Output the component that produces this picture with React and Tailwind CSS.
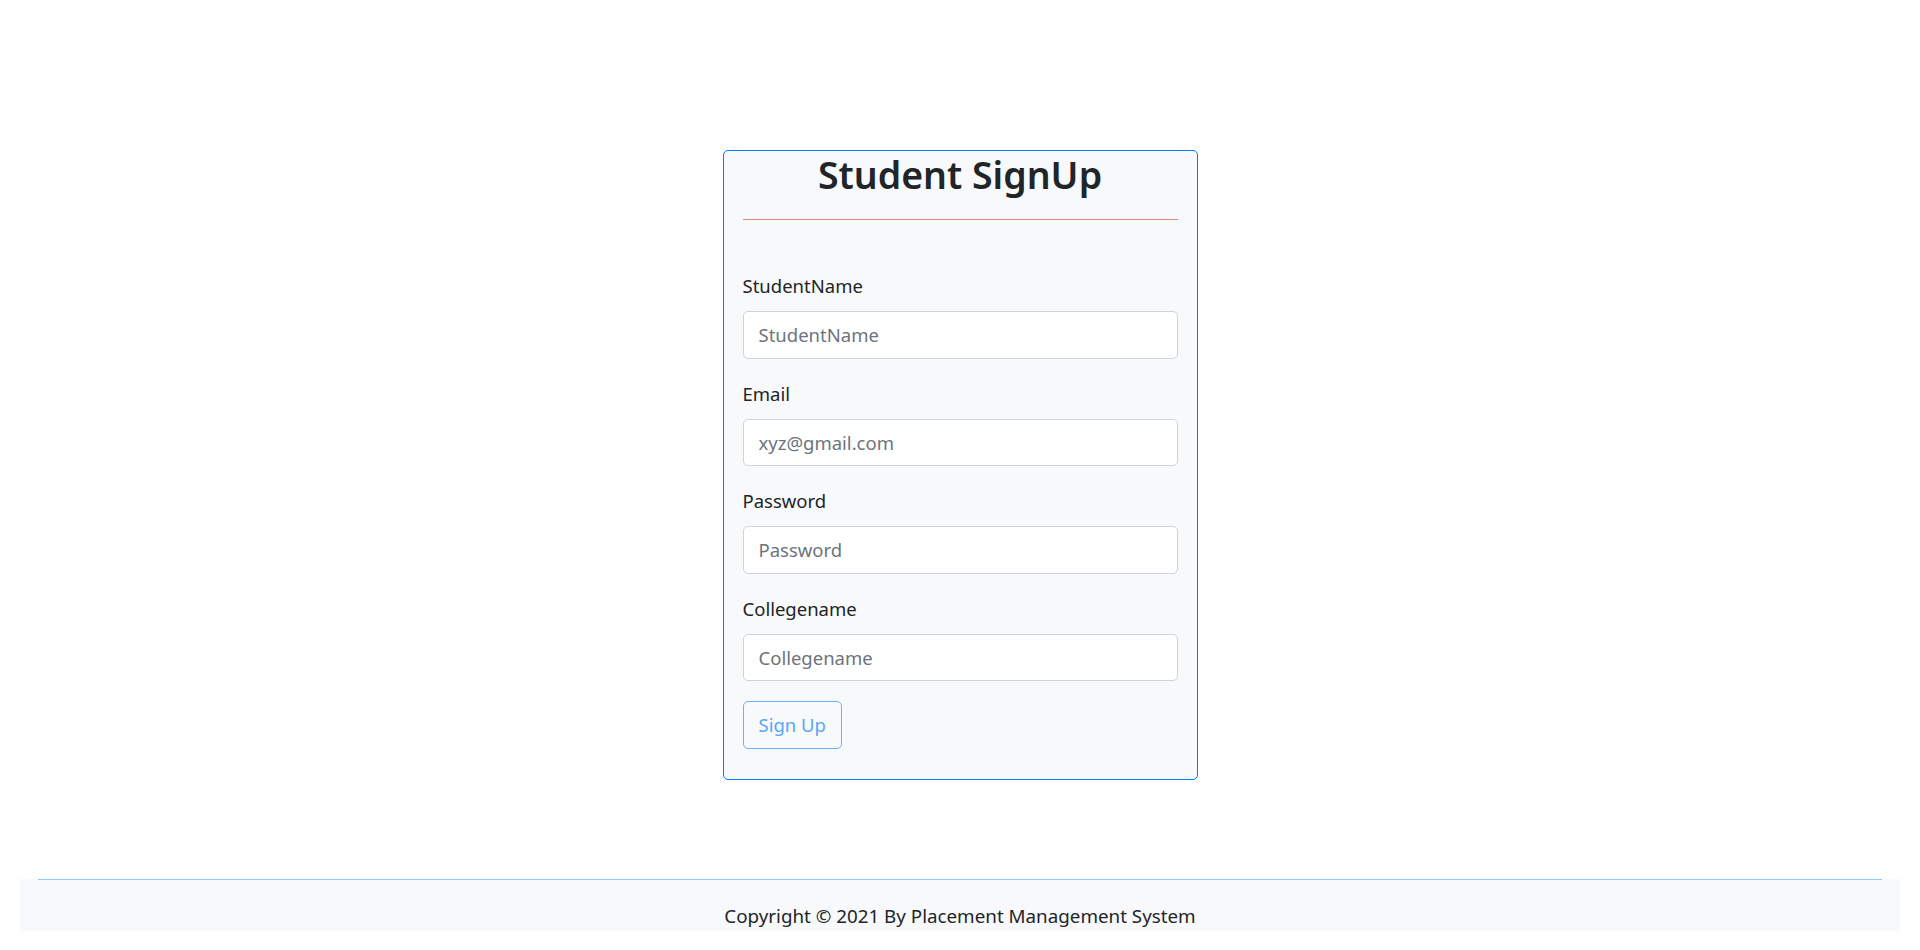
import React from 'react'

const fields = [
  { label: 'StudentName', placeholder: 'StudentName', type: 'text' },
  { label: 'Email', placeholder: 'xyz@gmail.com', type: 'email' },
  { label: 'Password', placeholder: 'Password', type: 'password' },
  { label: 'Collegename', placeholder: 'Collegename', type: 'text' },
]

export default function App() {
  return (
    <div className="min-h-screen bg-white text-[#212529] font-['Noto_Sans',sans-serif]">
      {/* Signup card */}
      <div className="pt-[150px]">
        <div className="w-[475px] mx-auto bg-[#f8f9fa] border border-[#007bff] rounded-[5px] px-[19px]">
          <h2 className="text-center text-[37.5px] font-semibold leading-[48px]">Student SignUp</h2>
          <hr className="my-[20px] border-0 border-t border-[#e08585]" />
          <form className="pt-[31px]" onSubmit={(e) => e.preventDefault()}>
            {fields.map((f) => (
              <div key={f.label} className="mb-[20px]">
                <label className="block text-[18.5px] leading-[30px] mb-[10px]">{f.label}</label>
                <input
                  type={f.type}
                  placeholder={f.placeholder}
                  className="block w-full h-[47.5px] bg-white border border-[#ced4da] rounded-[5px] px-[15px] text-[18.5px] placeholder:text-[#6c757d] outline-none"
                />
              </div>
            ))}
            <button
              type="submit"
              className="h-[47.5px] px-[15px] mb-[30px] border border-[#6cb1fb] rounded-[5px] text-[18.5px] text-[#5aa6f8]"
            >
              Sign Up
            </button>
          </form>
        </div>
      </div>

      {/* Footer */}
      <footer className="mt-[99px] mx-[20px] bg-[#f8f9fa]">
        <hr className="mx-[18px] border-0 border-t border-[#8ecbf7]" />
        <p className="pt-[21px] text-center text-[18.8px] leading-[30px]">
          Copyright © 2021 By Placement Management System
        </p>
      </footer>
    </div>
  )
}
